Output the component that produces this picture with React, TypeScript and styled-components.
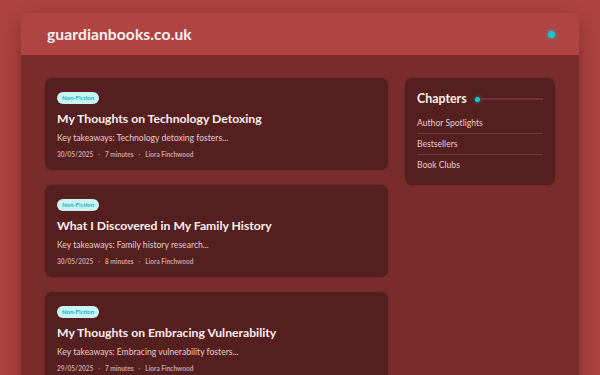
import React from "react";
import styled, { createGlobalStyle } from "styled-components";

const Global = createGlobalStyle`
  html, body { margin: 0; padding: 0; background: #b04443; }
  body { font-family: "Lato", "Inter", sans-serif; }
  * { box-sizing: border-box; }
`;

const Page = styled.div`
  padding: 13px 21px 0;
  min-height: 375px;
`;

const Shell = styled.div`
  background: #7a2c2d;
  border-radius: 4px 4px 0 0;
  box-shadow: 0 8px 28px rgba(40, 0, 0, 0.35);
  min-height: 362px;
  overflow: hidden;
`;

const Header = styled.header`
  height: 42px;
  background: #b04443;
  display: flex;
  align-items: center;
  justify-content: space-between;
  padding: 0 24px 0 26px;
`;

const Logo = styled.div`
  color: #fbefef;
  font-weight: 700;
  font-size: 15.6px;
  letter-spacing: 0.1px;
`;

const Dot = styled.span<{ $size?: number }>`
  display: inline-block;
  width: ${(p) => p.$size ?? 7}px;
  height: ${(p) => p.$size ?? 7}px;
  border-radius: 50%;
  background: #12c9d2;
  box-shadow: 0 0 4px rgba(18, 201, 210, 0.7);
  flex: none;
`;

const Main = styled.main`
  display: grid;
  grid-template-columns: 345px 152px;
  gap: 15px;
  padding: 22px 23px;
  align-items: start;
`;

const Column = styled.div`
  display: flex;
  flex-direction: column;
  gap: 13px;
`;

const Card = styled.article`
  background: #561f1f;
  border: 1px solid #6b2b2b;
  border-radius: 8px;
  padding: 14px 12px 11px;
  display: flex;
  flex-direction: column;
`;

const Badge = styled.span`
  align-self: flex-start;
  background: #c9f6f4;
  color: #14b3bd;
  font-size: 6px;
  font-weight: 700;
  padding: 3px 5px;
  border-radius: 6px;
  line-height: 6px;
`;

const Title = styled.h2`
  margin: 7px 0 0;
  color: #fbefef;
  font-size: 12.2px;
  font-weight: 700;
  line-height: 16px;
`;

const Excerpt = styled.p`
  margin: 5px 0 0;
  color: #e5cccc;
  font-size: 8.6px;
  line-height: 12px;
`;

const Meta = styled.div`
  margin-top: 7px;
  display: flex;
  align-items: center;
  gap: 5px;
  color: #c7a3a3;
  font-size: 6.5px;
  font-weight: 700;
  line-height: 8px;
`;

const Sep = styled.span`
  color: #a77e7e;
`;

const Side = styled.aside`
  background: #561f1f;
  border: 1px solid #6b2b2b;
  border-radius: 8px;
  padding: 13px 12px 10px;
`;

const SideHead = styled.div`
  display: flex;
  align-items: center;
  gap: 8px;
  margin-bottom: 6px;
`;

const SideTitle = styled.h3`
  margin: 0;
  color: #fbefef;
  font-size: 12.4px;
  font-weight: 700;
  line-height: 16px;
`;

const Rule = styled.div`
  flex: 1;
  height: 2px;
  background: #6e3434;
  margin-left: -8px;
`;

const Item = styled.a`
  display: block;
  color: #e5cccc;
  font-size: 8.6px;
  line-height: 20px;
  padding: 0;
  text-decoration: none;
  & + & {
    border-top: 1px solid #73393a;
  }
`;

const posts = [
  { title: "My Thoughts on Technology Detoxing", excerpt: "Key takeaways: Technology detoxing fosters...", date: "30/05/2025", time: "7 minutes" },
  { title: "What I Discovered in My Family History", excerpt: "Key takeaways: Family history research...", date: "30/05/2025", time: "8 minutes" },
  { title: "My Thoughts on Embracing Vulnerability", excerpt: "Key takeaways: Embracing vulnerability fosters...", date: "29/05/2025", time: "7 minutes" },
];

export default function App() {
  return (
    <>
      <Global />
      <Page>
        <Shell>
          <Header>
            <Logo>guardianbooks.co.uk</Logo>
            <Dot $size={7} />
          </Header>
          <Main>
            <Column>
              {posts.map((p) => (
                <Card key={p.title}>
                  <Badge>Non-Fiction</Badge>
                  <Title>{p.title}</Title>
                  <Excerpt>{p.excerpt}</Excerpt>
                  <Meta>
                    <span>{p.date}</span>
                    <Sep>·</Sep>
                    <span>{p.time}</span>
                    <Sep>·</Sep>
                    <span>Liora Finchwood</span>
                  </Meta>
                </Card>
              ))}
            </Column>
            <Side>
              <SideHead>
                <SideTitle>Chapters</SideTitle>
                <Dot $size={5} />
                <Rule />
              </SideHead>
              <Item>Author Spotlights</Item>
              <Item>Bestsellers</Item>
              <Item>Book Clubs</Item>
            </Side>
          </Main>
        </Shell>
      </Page>
    </>
  );
}
